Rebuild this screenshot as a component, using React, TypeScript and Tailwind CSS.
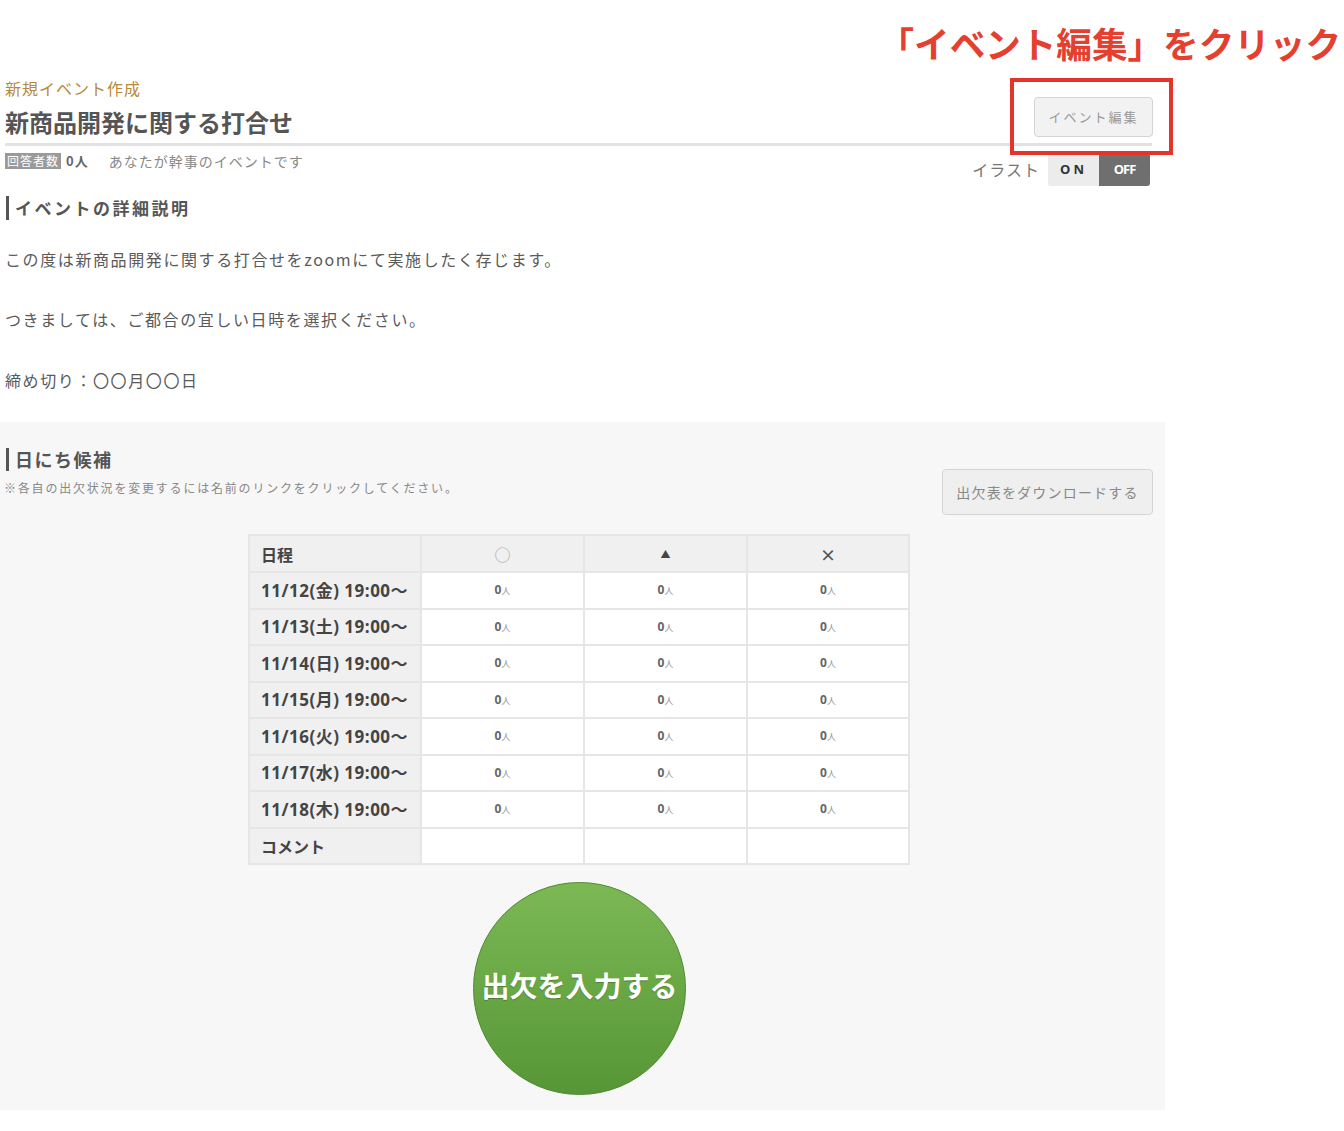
const FONT = { fontFamily: '"Noto Sans CJK JP", "Noto Sans", sans-serif' };
const NUM = { fontFamily: '"Open Sans", "Noto Sans CJK JP", sans-serif' };

const dates = [
  "11/12(金) 19:00〜",
  "11/13(土) 19:00〜",
  "11/14(日) 19:00〜",
  "11/15(月) 19:00〜",
  "11/16(火) 19:00〜",
  "11/17(水) 19:00〜",
  "11/18(木) 19:00〜",
];

function Count() {
  return (
    <div className="flex justify-center items-baseline text-[#666] leading-none" style={NUM}>
      <span className="text-[12px] font-bold">0</span>
      <span className="text-[9px] text-[#999]">人</span>
    </div>
  );
}

export default function App() {
  return (
    <div className="relative w-[1344px] h-[1131px] bg-white text-[#555]" style={FONT}>
      {/* annotation */}
      <p className="absolute right-[3px] top-[19px] text-[35.6px] leading-[48px] font-bold text-[#e5402f]">
        「イベント編集」をクリック
      </p>
      <div className="absolute left-[1010px] top-[78px] w-[163px] h-[77px] border-[4px] border-[#e5342c]" />

      <div className="w-[1165px] pt-[76px]">
        {/* header */}
        <div className="mx-[5px] w-[1147px] flex justify-between border-b-[3px] border-[#e2e2e2] pb-[5px]">
          <div>
            <p className="text-[16px] leading-[24px] text-[#b58a3c] tracking-[1px]">新規イベント作成</p>
            <h1 className="mt-[6px] text-[24px] leading-[32px] font-bold text-[#555]">新商品開発に関する打合せ</h1>
          </div>
          <div className="pt-[21px]">
            <button className="w-[119px] h-[40px] mr-[-1px] rounded-[4px] border border-[#d4d4d4] bg-[#f2f2f2] text-[13px] tracking-[2px] text-[#999]">
              イベント編集
            </button>
          </div>
        </div>

        {/* meta row */}
        <div className="mx-[5px] w-[1147px] flex justify-between items-start">
          <div className="mt-[6px] flex items-center h-[18px] text-[13px]">
            <span className="bg-[#9a9a9a] text-white text-[12px] leading-[16px] px-[2px] tracking-[1px]">回答者数</span>
            <span className="ml-[5px] font-bold text-[#666] tracking-[1px]">0人</span>
            <span className="ml-[20px] text-[#888] text-[14px] tracking-[1px]">あなたが幹事のイベントです</span>
          </div>
          <div className="mt-[7px] mr-[2px] flex items-center">
            <span className="text-[16px] text-[#777] mr-[8px] mt-[-2px] tracking-[1px]">イラスト</span>
            <div className="flex h-[33px] rounded-[3px] overflow-hidden">
              <div className="w-[51px] bg-[#ececec] flex items-center justify-center text-[13px] font-bold tracking-[3px] text-[#333]" style={NUM}>
                ON
              </div>
              <div className="w-[51px] bg-[#6f6f6f] flex items-center justify-center text-[13px] font-bold text-white tracking-[-1px]" style={NUM}>
                OFF
              </div>
            </div>
          </div>
        </div>

        {/* description */}
        <h2 className="mt-[10px] ml-[6px] border-l-[3px] border-[#555] pl-[6px] text-[17px] leading-[24px] font-bold text-[#555] tracking-[2.5px]">
          イベントの詳細説明
        </h2>
        <div className="px-[5px] text-[16px] leading-[24px] text-[#5a5a5a] tracking-[1.6px]">
          <p className="mt-[27px]">この度は新商品開発に関する打合せをzoomにて実施したく存じます。</p>
          <p className="mt-[36px]">つきましては、ご都合の宜しい日時を選択ください。</p>
          <p className="mt-[37px]">締め切り：〇〇月〇〇日</p>
        </div>

        {/* candidates */}
        <div className="mt-[30px] h-[688px] bg-[#f7f7f7] pt-[26px]">
          <div className="flex justify-between pl-[6px] pr-[12px]">
            <div>
              <h2 className="border-l-[3px] border-[#555] pl-[6px] text-[18px] leading-[23px] font-bold text-[#555] tracking-[1.5px]">
                日にち候補
              </h2>
              <p className="mt-[9px] ml-[-2px] text-[12px] leading-[16px] text-[#888] tracking-[1.8px]">
                ※各自の出欠状況を変更するには名前のリンクをクリックしてください。
              </p>
            </div>
            <button className="mt-[21px] w-[211px] h-[46px] rounded-[4px] border border-[#d4d4d4] bg-[#efefef] text-[14px] tracking-[1.2px] text-[#888]">
              出欠表をダウンロードする
            </button>
          </div>

          <table className="mt-[19px] ml-[248px] border-collapse border-2 border-[#e6e6e6] text-[#444]">
            <thead>
              <tr className="h-[37px] bg-[#f0f0f0]">
                <th className="w-[172px] border-2 border-[#e6e6e6] text-left pl-[11px] text-[16px] font-bold">日程</th>
                <th className="w-[163px] border-2 border-[#e6e6e6] text-[16px] font-normal text-[#aaa]">○</th>
                <th className="w-[163px] border-2 border-[#e6e6e6] text-[10px] font-bold">▲</th>
                <th className="w-[162px] border-2 border-[#e6e6e6] text-[16px] font-bold text-[#555]">×</th>
              </tr>
            </thead>
            <tbody>
              {dates.map((d) => (
                <tr key={d} className="h-[36.5px]">
                  <td className="bg-[#f0f0f0] border-2 border-[#e6e6e6] pl-[11px] text-[17px] font-bold text-[#444] tracking-[0.5px] whitespace-nowrap" style={NUM}>
                    {d}
                  </td>
                  <td className="bg-white border-2 border-[#e6e6e6]"><Count /></td>
                  <td className="bg-white border-2 border-[#e6e6e6]"><Count /></td>
                  <td className="bg-white border-2 border-[#e6e6e6]"><Count /></td>
                </tr>
              ))}
              <tr className="h-[36.5px]">
                <td className="bg-[#f0f0f0] border-2 border-[#e6e6e6] pl-[11px] text-[16px] font-bold">コメント</td>
                <td className="bg-white border-2 border-[#e6e6e6]" />
                <td className="bg-white border-2 border-[#e6e6e6]" />
                <td className="bg-white border-2 border-[#e6e6e6]" />
              </tr>
            </tbody>
          </table>

          <button className="mt-[17px] ml-[473px] w-[213px] h-[213px] rounded-full border border-[#4f8a30] bg-gradient-to-b from-[#7cb955] to-[#579636] flex items-center justify-center pb-[8px] text-white text-[28px] font-bold [text-shadow:0_1px_1px_rgba(0,0,0,0.25)]">
            出欠を入力する
          </button>
        </div>
      </div>
    </div>
  );
}
